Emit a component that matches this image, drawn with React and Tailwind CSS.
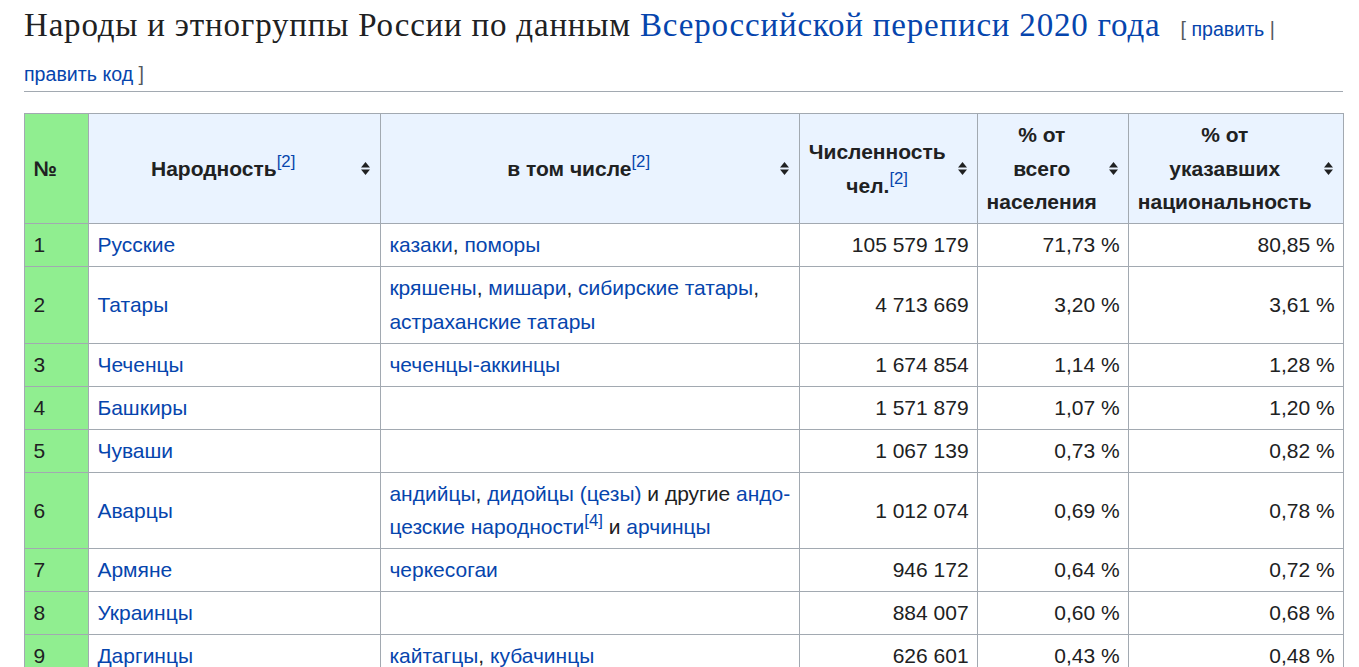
import React from "react";

const rows = [
  { n: 1, name: "Русские", sub: [["a", "казаки"], ["t", ", "], ["a", "поморы"]], num: "105 579 179", all: "71,73 %", spec: "80,85 %" },
  {
    n: 2,
    name: "Татары",
    sub: [["a", "кряшены"], ["t", ", "], ["a", "мишари"], ["t", ", "], ["a", "сибирские татары"], ["t", ","], ["br"], ["a", "астраханские татары"]],
    num: "4 713 669",
    all: "3,20 %",
    spec: "3,61 %",
  },
  { n: 3, name: "Чеченцы", sub: [["a", "чеченцы-аккинцы"]], num: "1 674 854", all: "1,14 %", spec: "1,28 %" },
  { n: 4, name: "Башкиры", sub: [], num: "1 571 879", all: "1,07 %", spec: "1,20 %" },
  { n: 5, name: "Чуваши", sub: [], num: "1 067 139", all: "0,73 %", spec: "0,82 %" },
  {
    n: 6,
    name: "Аварцы",
    sub: [["a", "андийцы"], ["t", ", "], ["a", "дидойцы (цезы)"], ["t", " и другие "], ["a", "андо-"], ["br"], ["a", "цезские народности"], ["sup", "[4]"], ["t", " и "], ["a", "арчинцы"]],
    num: "1 012 074",
    all: "0,69 %",
    spec: "0,78 %",
  },
  { n: 7, name: "Армяне", sub: [["a", "черкесогаи"]], num: "946 172", all: "0,64 %", spec: "0,72 %" },
  { n: 8, name: "Украинцы", sub: [], num: "884 007", all: "0,60 %", spec: "0,68 %" },
  { n: 9, name: "Даргинцы", sub: [["a", "кайтагцы"], ["t", ", "], ["a", "кубачинцы"]], num: "626 601", all: "0,43 %", spec: "0,48 %" },
];

function Ref({ children }) {
  return (
    <sup className="text-[0.8em] font-normal leading-none text-[#0645ad]">{children}</sup>
  );
}

function SortIcon() {
  return (
    <svg width="9" height="13" viewBox="0 0 9 13" className="shrink-0">
      <path d="M0 5.5 L4.5 0 L9 5.5 Z" fill="#202122" />
      <path d="M0 7.5 L9 7.5 L4.5 13 Z" fill="#202122" />
    </svg>
  );
}

function Th({ children }) {
  return (
    <th className="border border-[#a2a9b1] bg-[#eaf3ff] py-[4.2px] pl-[8.4px] pr-[10px] align-middle font-bold">
      <div className="flex items-center">
        <div className="flex-1 whitespace-nowrap pr-[12px] text-center">{children}</div>
        <SortIcon />
      </div>
    </th>
  );
}

function Sub({ parts }) {
  return parts.map((p, i) => {
    if (p[0] === "a") return <a key={i} className="text-[#0645ad]">{p[1]}</a>;
    if (p[0] === "br") return <br key={i} />;
    if (p[0] === "sup") return <Ref key={i}>{p[1]}</Ref>;
    return <span key={i}>{p[1]}</span>;
  });
}

export default function App() {
  const td = "border border-[#a2a9b1] py-[4.2px] px-[8.4px] align-middle";
  return (
    <div className="bg-white pl-[24px] pr-[16px] pb-10 font-['Liberation_Sans',Arial,sans-serif] text-[#202122]">
      <h2 className="mb-[21px] border-b border-[#a2a9b1] pt-[3px] pb-[3px] font-normal">
        <div className="whitespace-nowrap font-['Liberation_Serif','Times_New_Roman',serif] text-[33px] leading-[44px] tracking-[0.8px]">
          Народы и этногруппы России по данным{" "}
          <a className="text-[#0645ad]">Всероссийской переписи 2020 года</a>
          <span className="ml-[20px] font-['Liberation_Sans',Arial,sans-serif] text-[19.6px] leading-none tracking-normal text-[#54595d]">
            [ <a className="text-[#0645ad]">править</a> |
          </span>
        </div>
        <div className="mt-[13px] text-[19.6px] leading-[28px] text-[#54595d]">
          <a className="text-[#0645ad]">править код</a> ]
        </div>
      </h2>

      <table className="w-[1319px] table-fixed border-collapse border border-[#a2a9b1] text-[21px] leading-[1.6]">
        <colgroup>
          <col className="w-[64px]" />
          <col className="w-[292px]" />
          <col className="w-[419px]" />
          <col className="w-[178px]" />
          <col className="w-[151px]" />
          <col className="w-[215px]" />
        </colgroup>
        <thead>
          <tr>
            <th className="border border-[#a2a9b1] bg-[#90ee90] py-[4.2px] px-[8.4px] text-left font-bold">№</th>
            <Th>
              Народность<Ref>[2]</Ref>
            </Th>
            <Th>
              в том числе<Ref>[2]</Ref>
            </Th>
            <Th>
              Численность
              <br />
              чел.<Ref>[2]</Ref>
            </Th>
            <Th>
              % от
              <br />
              всего
              <br />
              населения
            </Th>
            <Th>
              % от
              <br />
              указавших
              <br />
              национальность
            </Th>
          </tr>
        </thead>
        <tbody>
          {rows.map((r) => (
            <tr key={r.n}>
              <td className={td + " bg-[#90ee90]"}>{r.n}</td>
              <td className={td}>
                <a className="text-[#0645ad]">{r.name}</a>
              </td>
              <td className={td}>
                <Sub parts={r.sub} />
              </td>
              <td className={td + " text-right"}>{r.num.replace(/ /g, "\u00a0")}</td>
              <td className={td + " text-right"}>{r.all.replace(/ /g, "\u00a0")}</td>
              <td className={td + " text-right"}>{r.spec.replace(/ /g, "\u00a0")}</td>
            </tr>
          ))}
        </tbody>
      </table>
    </div>
  );
}
